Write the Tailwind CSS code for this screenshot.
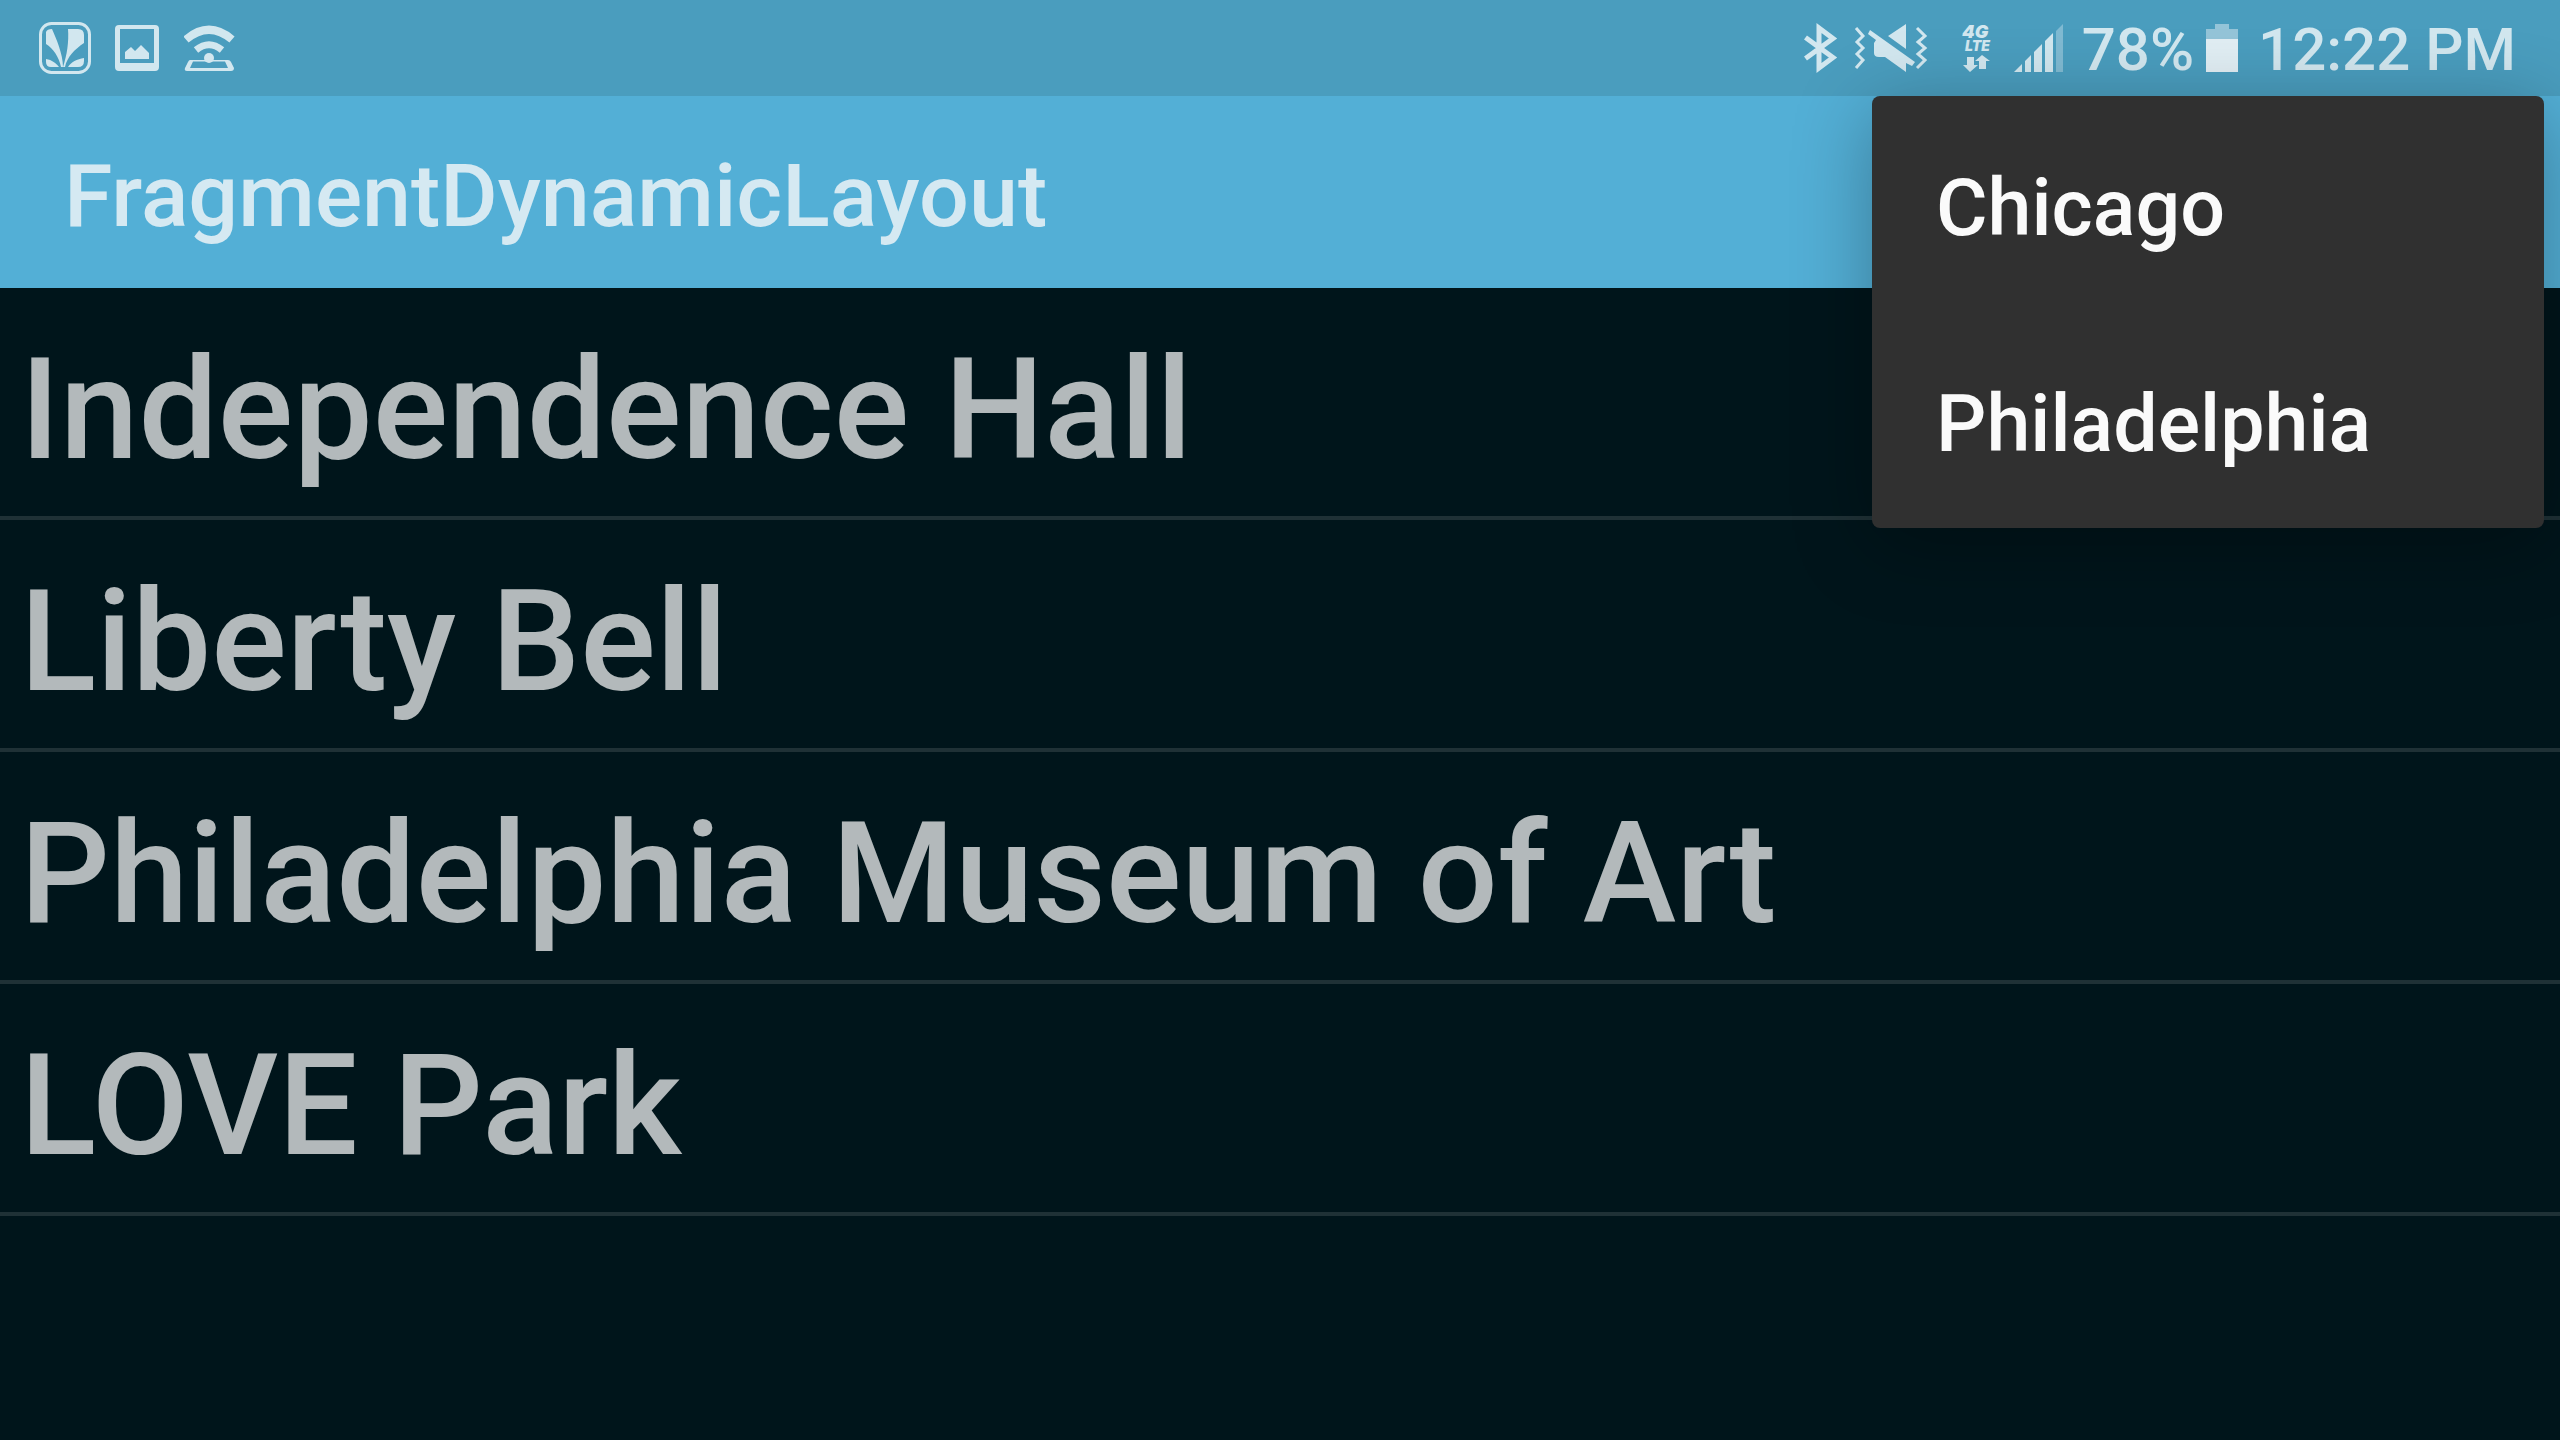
<!DOCTYPE html>
<html lang="en">
<head>
<meta charset="utf-8">
<meta name="viewport" content="width=device-width, initial-scale=1">
<title>FragmentDynamicLayout</title>
<script src="https://cdn.jsdelivr.net/npm/@tailwindcss/browser@4"></script>
</head>
<body class="min-h-screen overflow-x-hidden bg-[#00151b] font-['Roboto',sans-serif] font-medium">
<div class="relative">
  <div class="flex h-24 items-center justify-between bg-[#4a9dbe] pr-11 pl-9 text-[#d2e7ef]">
    <div class="flex items-center gap-[18px]">
      <svg class="h-14 w-14" viewBox="0 0 56 56" fill="currentColor" aria-label="Saavn">
        <rect x="4.500" y="3.500" width="49" height="49" rx="11" fill="none" stroke="currentColor" stroke-width="3"/>
        <path d="M10 12Q11 9 16 9C20 18 27 34 27 47H25C23 37 17 28 10 24ZM33 9H42Q48 9 48 15V23C39 29 31 37 29 47H27C31 35 33 22 32 9ZM10 39C16 40 20 43 23 47H15Q10 47 10 42ZM48 38V41Q48 47 42 47H32C35 42 41 39 48 38Z"/>
      </svg>
      <svg class="h-14 w-14" viewBox="0 0 56 56" fill="currentColor" aria-label="Screenshot">
        <path fill-rule="evenodd" d="M9 5H45Q49 5 49 9V47Q49 51 45 51H9Q5 51 5 47V9Q5 5 9 5ZM10 9V43H44V9Z"/>
        <path d="M15 39V32L21 27L25 31L31 25L39 33V39Z"/>
      </svg>
      <svg class="h-14 w-14" viewBox="0 0 56 56" fill="none" stroke="currentColor" aria-label="Wi-Fi hotspot">
        <path d="M2 19.500Q25 0 48 19.500" stroke-width="8"/>
        <path d="M12 30Q25 19.500 38 30" stroke-width="7"/>
        <circle cx="25" cy="38" r="5" fill="currentColor" stroke="none"/>
        <path d="M6 40H44Q46 40 47 42L50 48Q50 51 47 51H3Q0 51 1 48L4 42Q5 40 6 40ZM9 41.500L6 48H44L41 41.500Z" fill="currentColor" fill-rule="evenodd" stroke="none"/>
      </svg>
    </div>
    <div class="flex items-center">
      <svg class="h-14 w-64" viewBox="1800 20 256 56" fill="currentColor" aria-label="Bluetooth, vibrate, 4G LTE, signal">
        <path d="M1803.500 37.500L1831 57.500L1817 68V28L1831 38.500L1803.500 58.500" fill="none" stroke="currentColor" stroke-width="5"/>
        <path d="M1854 28L1861 36L1855 42L1861 48L1855 54L1861 60L1854 68M1915 28L1923 36L1916 42L1923 48L1916 54L1923 60L1915 68" fill="none" stroke="currentColor" stroke-width="3"/>
        <path d="M1868 30L1913 62L1910 66L1904 63V72L1883 57H1877Q1872 57 1872 53V43L1874 40L1866 34ZM1904 24V49L1886 36Z"/>
        <text x="1960" y="38" class="font-['Inter',sans-serif] text-[18px] font-black italic">4G</text>
        <text x="1963" y="51" class="font-['Inter',sans-serif] text-[14px] font-black italic">LTE</text>
        <path d="M1965 57H1972V65H1976L1968 72L1961 65H1965ZM1977 69V61H1973L1980 55L1988 61H1984V69Z"/>
        <path d="M2012 72L2020 64V72ZM2023 72V61L2029 55V72ZM2032 72V52L2040 44V72ZM2043 72V41L2051 33V72Z"/>
      </svg>
      <svg class="-ml-2 h-14 w-4" viewBox="2048 20 16 56" fill="currentColor" aria-hidden="true"><path opacity=".4" d="M2054 72V31L2061 24V72Z"/></svg>
      <span class="ml-4 pt-1 text-[60px] leading-23">78%</span>
      <svg class="mx-3 h-14 w-8" viewBox="0 0 32 56" aria-label="Battery">
        <path d="M9 4H23V9H32V19H0V9H9Z" fill="#94c4d8"/><path d="M0 19H32V52H0Z" fill="#e1eef4"/>
      </svg>
      <span class="ml-2 pt-1 text-[60px] leading-23">12:22 PM</span>
    </div>
  </div>
  <header class="flex h-48 items-center bg-[#53afd6] px-16 pt-2">
    <h1 class="text-[88px] leading-[104px] text-[#d5e9f2]">FragmentDynamicLayout</h1>
  </header>
  <div role="menu" aria-label="City" class="absolute top-24 right-4 flex w-[672px] flex-col rounded-lg bg-[#303030] text-[79px] leading-24 text-[#fafafa] shadow-[0_16px_80px_rgba(0,0,0,0.3)]">
    <button role="menuitem" class="h-[216px] px-16 pt-2 text-left">Chicago</button>
    <button role="menuitem" class="h-[216px] px-16 pt-2 text-left">Philadelphia</button>
  </div>
  <ul class="text-[141px] leading-[212px] text-white/70">
    <li class="border-b-4 border-white/12 px-5 pt-4">Independence Hall</li>
    <li class="border-b-4 border-white/12 px-5 pt-4">Liberty Bell</li>
    <li class="border-b-4 border-white/12 px-5 pt-4">Philadelphia Museum of Art</li>
    <li class="border-b-4 border-white/12 px-5 pt-4">LOVE Park</li>
  </ul>
</div>
</body>
</html>
